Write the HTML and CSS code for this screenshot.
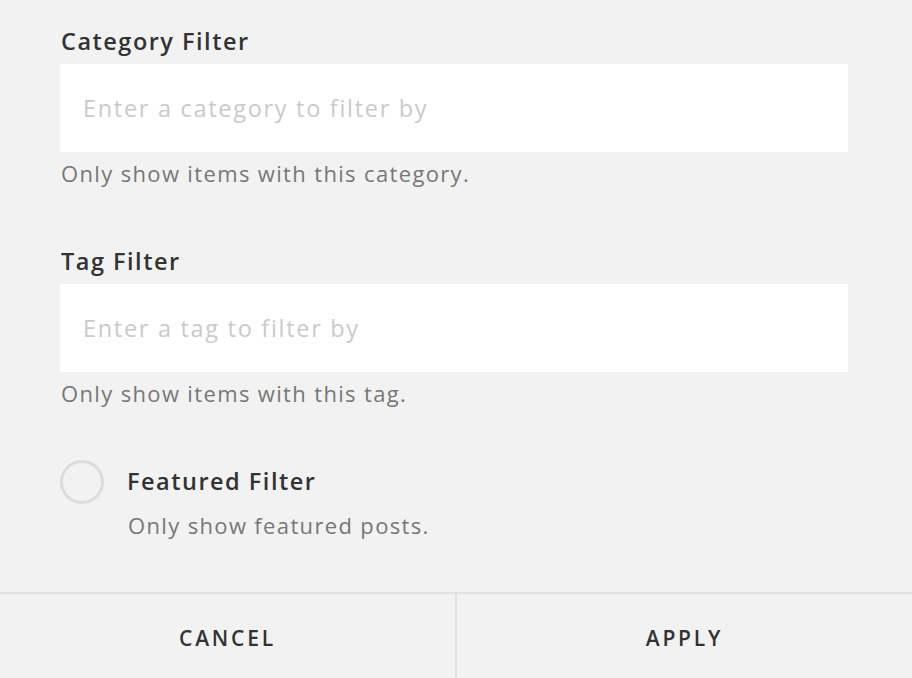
FILE: index.html
```html
<!DOCTYPE html>
<html lang="en">
<head>
    <meta charset="UTF-8">
    <meta name="viewport" content="width=device-width, initial-scale=1.0">
    <title>Filters</title>
    <link rel="stylesheet" href="styles.css">
</head>
<body>
    <div class="panel">
        <form class="filters">
            <div class="field">
                <label class="field-label" for="category">Category Filter</label>
                <input class="field-input" id="category" type="text" placeholder="Enter a category to filter by">
                <p class="field-help">Only show items with this category.</p>
            </div>
            <div class="field">
                <label class="field-label" for="tag">Tag Filter</label>
                <input class="field-input" id="tag" type="text" placeholder="Enter a tag to filter by">
                <p class="field-help">Only show items with this tag.</p>
            </div>
            <div class="toggle">
                <span class="toggle-circle"></span>
                <div class="toggle-text">
                    <div class="toggle-label">Featured Filter</div>
                    <p class="field-help">Only show featured posts.</p>
                </div>
            </div>
        </form>
        <div class="actions">
            <button type="button" class="action">Cancel</button>
            <button type="button" class="action">Apply</button>
        </div>
    </div>
</body>
</html>
```

FILE: styles.css
```css
body {
    font-family: "Open Sans", Lato, sans-serif;
    background-color: #f2f2f2;
    margin: 0;
    color: #333;
}

.panel {
    height: 678px;
    display: flex;
    flex-direction: column;
}

.filters {
    flex: 1;
    padding: 26px 64px 0 60px;
}

.field {
    margin-bottom: 60px;
}

.field-label {
    display: block;
    font-size: 23.5px;
    font-weight: 600;
    letter-spacing: 1.5px;
    color: #333;
    height: 38px;
    line-height: 30px;
    padding-left: 1px;
}

.field-input {
    display: block;
    box-sizing: border-box;
    width: 100%;
    height: 88px;
    border: none;
    background: white;
    padding: 0 23px;
    font-family: inherit;
    font-size: 23.5px;
    letter-spacing: 1.7px;
    color: #333;
    outline: none;
}

.field-input::placeholder {
    color: #cacaca;
}

.field-help {
    margin: 10px 0 0 1px;
    font-size: 22px;
    line-height: 22px;
    letter-spacing: 1.35px;
    color: #777;
}

.field-help + .field-help,
.field > .field-help {
    padding-bottom: 2px;
}

.toggle {
    display: flex;
    gap: 23px;
    margin-top: -6px;
}

.toggle-circle {
    width: 38px;
    height: 38px;
    border: 3px solid #dcdcdc;
    border-radius: 50%;
    flex-shrink: 0;
}

.toggle-label {
    font-size: 23.5px;
    font-weight: 600;
    letter-spacing: 1.5px;
    line-height: 42px;
    color: #333;
}

.toggle-text .field-help {
    margin-top: 12px;
}

.actions {
    display: flex;
    height: 84px;
    border-top: 2px solid #e2e2e2;
}

.action {
    flex: 1;
    border: none;
    background: transparent;
    padding: 4px 0 0;
    font-family: inherit;
    font-size: 21px;
    font-weight: 600;
    letter-spacing: 2.8px;
    text-transform: uppercase;
    color: #333;
    cursor: pointer;
}

.action + .action {
    border-left: 2px solid #e2e2e2;
}
```
